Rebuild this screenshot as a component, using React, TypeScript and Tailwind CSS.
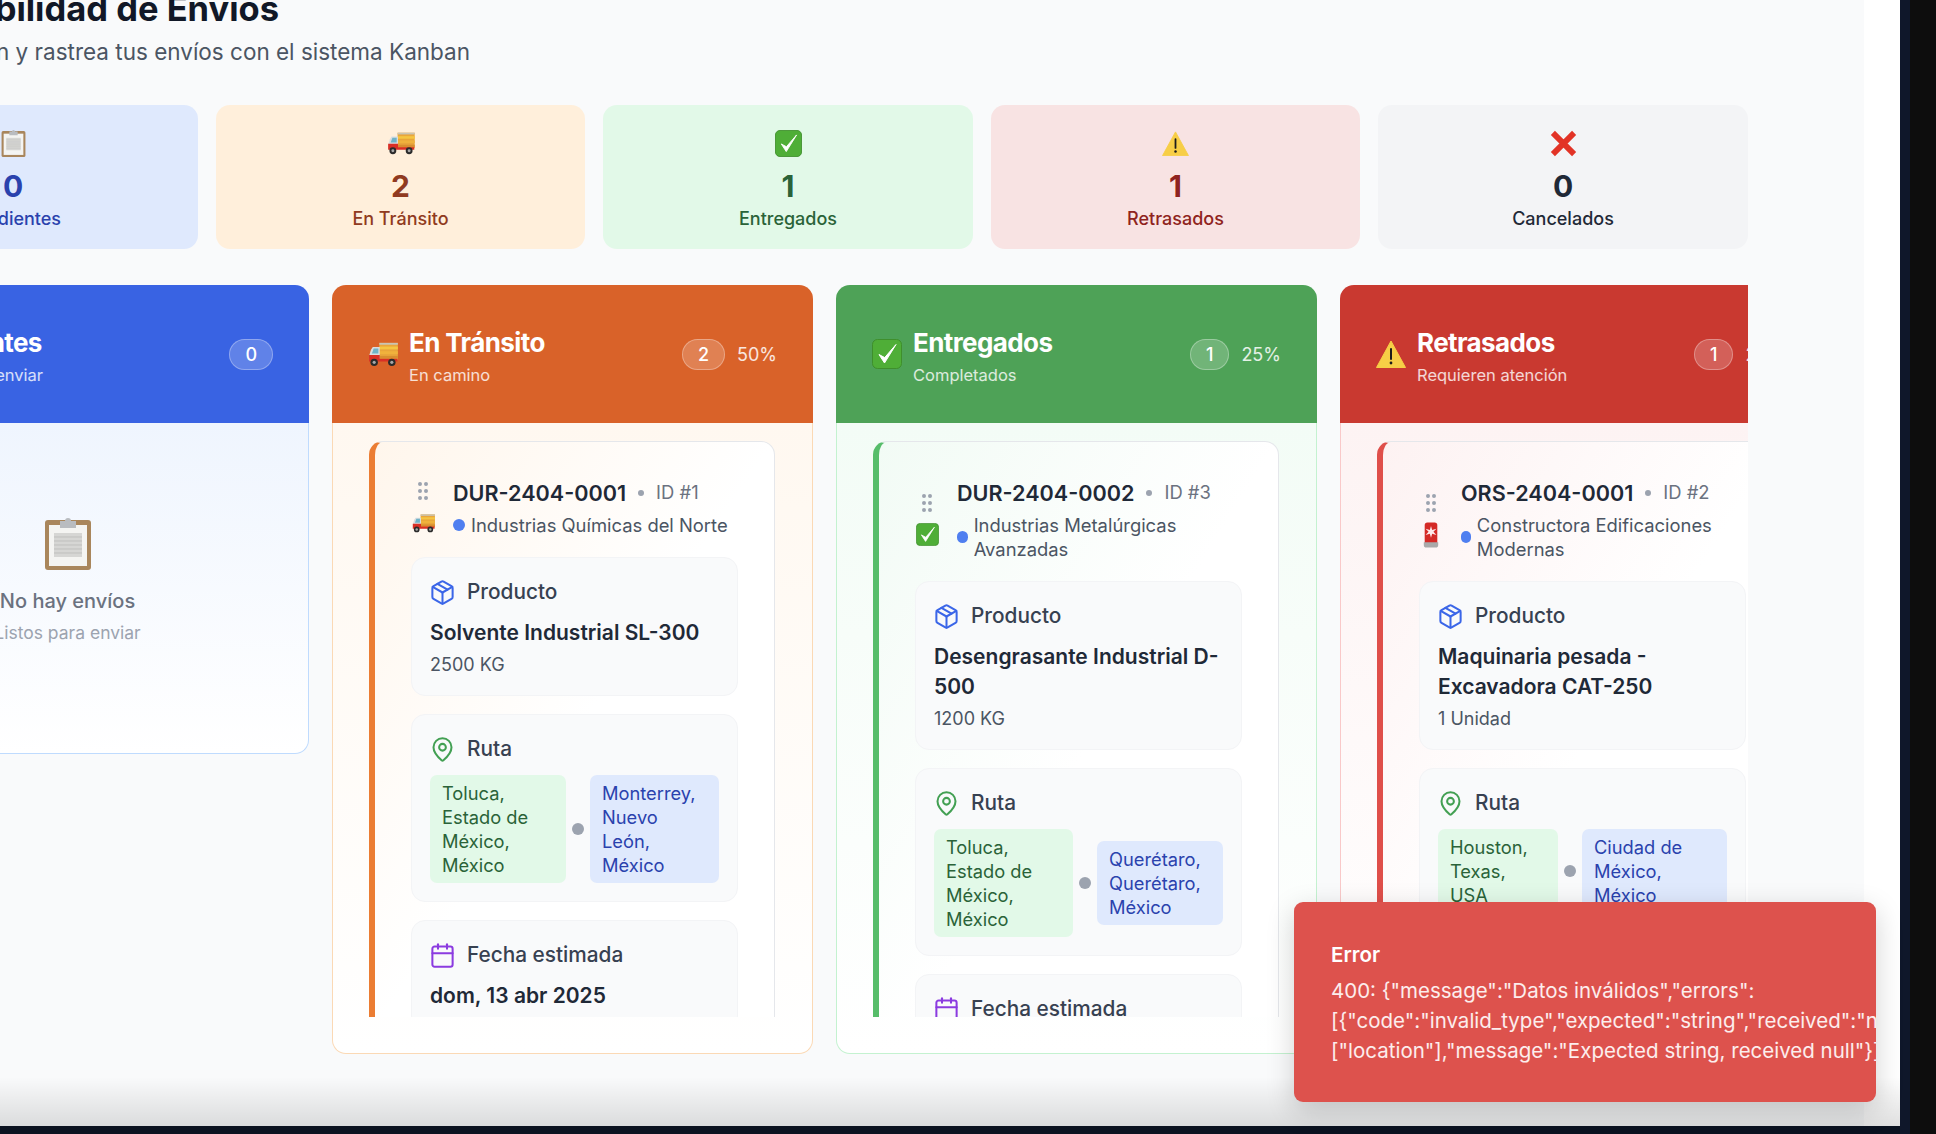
import { Calendar, GripVertical, MapPin, Package } from "lucide-react";
import type { ReactNode } from "react";

function Truck({ className }: { className: string }) {
  return (
    <svg viewBox="0 0 32 28" className={className}>
      <rect x="12" y="2" width="20" height="18" fill="#e9a63b" />
      <rect x="12" y="2" width="20" height="2" fill="#c9c4b4" />
      <rect x="12" y="6" width="20" height="3" fill="#f5c542" />
      <rect x="12" y="11" width="20" height="3" fill="#f0b23c" />
      <rect x="12" y="16" width="20" height="3" fill="#d98e2f" />
      <path d="M3 9.500 5 6.500h7.500v14H1.500v-6z" fill="#d9dde0" />
      <path d="M4 13.500 6 8h5v5.500z" fill="#6fb3c8" />
      <path d="M1 15h11.500v4H31.500v3H1z" fill="#d92f25" />
      <circle cx="6.500" cy="23" r="4" fill="#2b2b2b" />
      <circle cx="6.500" cy="23" r="1.700" fill="#a8a8a8" />
      <circle cx="25.500" cy="23" r="4" fill="#2b2b2b" />
      <circle cx="25.500" cy="23" r="1.700" fill="#a8a8a8" />
    </svg>
  );
}

function Check({ className }: { className: string }) {
  return (
    <svg viewBox="0 0 30 30" className={className}>
      <rect x="0.500" y="0.500" width="29" height="29" rx="5" fill="#4fae37" stroke="#3f8f2c" />
      <path d="M7 15.500 12.500 24 24 5.500 12.700 18.600z" fill="#fff" stroke="#fff" strokeWidth="1" strokeLinejoin="round" />
    </svg>
  );
}

function Warning({ className }: { className: string }) {
  return (
    <svg viewBox="0 0 30 28" className={className}>
      <path d="M15 1 29.500 27.500H.5z" fill="#f7ce46" stroke="#f7ce46" strokeLinejoin="round" />
      <rect x="14" y="8" width="2" height="12" rx="1" fill="#1c1c1c" />
      <circle cx="15" cy="23" r="1.400" fill="#1c1c1c" />
    </svg>
  );
}

function Cross({ className }: { className: string }) {
  return (
    <svg viewBox="0 0 28 28" className={className}>
      <path d="M3 3 25 25M25 3 3 25" stroke="#e23326" strokeWidth="6" fill="none" />
    </svg>
  );
}

function Siren({ className }: { className: string }) {
  return (
    <svg viewBox="0 0 20 28" className={className}>
      <path d="M3 3a3 3 0 0 1 3-3h8a3 3 0 0 1 3 3v20H3z" fill="#d42a26" />
      <path d="M10 4 11.300 8.500 16 7l-3.300 3.500L16 14l-4.700-1.500L10 17l-1.300-4.500L4 14l3.300-3.500L4 7l4.700 1.500z" fill="#fdeaea" />
      <path d="M2 22h16v3a3 3 0 0 1-3 3H5a3 3 0 0 1-3-3z" fill="#a9a9a9" />
    </svg>
  );
}

function Clipboard({ className }: { className: string }) {
  return (
    <svg viewBox="0 0 48 54" className={className}>
      <rect x="1" y="4" width="46" height="50" rx="3" fill="#a9865c" />
      <rect x="5" y="9" width="38" height="41" fill="#f4f4f2" />
      <rect x="10" y="17" width="28" height="24" fill="#d6d6d4" />
      <path d="M10 21h28M10 25h28M10 29h28M10 33h28M10 37h28" stroke="#bfbfbd" strokeWidth="1" />
      <path d="M16 5h5a3 3 0 0 1 6 0h5v7H16z" fill="#b9bcc0" />
    </svg>
  );
}

function Stat({ icon, value, label, bg, valueColor, labelColor, width }: { icon: ReactNode; value: string; label: string; bg: string; valueColor: string; labelColor: string; width: string }) {
  return (
    <div className={`flex h-[144px] shrink-0 flex-col items-center rounded-[14px] pt-[23px] ${bg} ${width}`}>
      <div className="flex h-[30px] items-center justify-center">{icon}</div>
      <div className={`mt-[10px] text-[30px] leading-[36px] font-bold ${valueColor}`}>{value}</div>
      <div className={`mt-[2px] text-[18px] leading-[26px] font-medium ${labelColor}`}>{label}</div>
    </div>
  );
}

function Section({ icon, label, children }: { icon: ReactNode; label: string; children: ReactNode }) {
  return (
    <div className="rounded-[14px] border border-[#f3f4f6] bg-[#f9fafb] pt-[18px] pr-[17px] pb-[18px] pl-[18px]">
      <div className="mb-[10px] flex h-[32px] items-center gap-[11px]">
        <div className="-ml-[1px] flex">{icon}</div>
        <span className="text-[20.800px] font-medium text-[#374151]">{label}</span>
      </div>
      {children}
    </div>
  );
}

function Chip({ lines, cls }: { lines: string[]; cls: string }) {
  return (
    <div className={`rounded-[7px] px-[12px] py-[6px] text-[18.300px] leading-[24px] ${cls}`}>
      {lines.map((l) => (
        <div key={l} className="whitespace-nowrap">{l}</div>
      ))}
    </div>
  );
}

type CardData = {
  code: string;
  id: string;
  client: string;
  emoji: ReactNode;
  bar: string;
  tint: string;
  product: string;
  qty: string;
  from: string[];
  to: string[];
  fromW: string;
  toW: string;
};

function ShipmentCard({ d }: { d: CardData }) {
  return (
    <div className={`w-[406px] shrink-0 self-start rounded-[14px] border border-l-[6px] border-[#e5e7eb] bg-gradient-to-br to-white to-50% px-[36px] pt-[37px] ${d.bar} ${d.tint}`}>
      <div className="flex gap-[18px]">
        <div className="flex w-[24px] shrink-0 flex-col items-center justify-center self-center">
          <GripVertical size={24} className="fill-[#9ca3af] text-[#9ca3af]" />
          <div className="flex h-[34px] items-center justify-center pt-[5px]">{d.emoji}</div>
        </div>
        <div className="min-w-0 flex-1">
          <div className="flex h-[28px] items-center">
            <span className="text-[21.600px] font-semibold whitespace-nowrap text-[#1f2937]">{d.code}</span>
            <span className="ml-[12px] h-[6px] w-[6px] rounded-full bg-[#9ca3af]" />
            <span className="ml-[12px] text-[18.400px] whitespace-nowrap text-[#6b7280]">{d.id}</span>
          </div>
          <div className="mt-[6px] flex items-center gap-[6px] text-[18.400px] leading-[24px] text-[#4b5563]">
            <span className="h-[12px] w-[12px] rounded-full bg-[#4f7ff0]" />
            <span>{d.client}</span>
          </div>
        </div>
      </div>
      <div className="mt-[20px] flex flex-col gap-[18px]">
        <Section icon={<Package size={27} strokeWidth={1.8} className="text-[#3b66e8]" />} label="Producto">
          <div className="mt-[1px] text-[21px] leading-[30px] font-semibold text-[#1f2937]">{d.product}</div>
          <div className="mt-[5px] text-[18px] leading-[24px] text-[#4b5563]">{d.qty}</div>
        </Section>
        <Section icon={<MapPin size={27} strokeWidth={1.8} className="text-[#43a053]" />} label="Ruta">
          <div className="flex items-center gap-[6px]">
            <div className={d.fromW}><Chip lines={d.from} cls="bg-[#e2f9e8] text-[#2a6338]" /></div>
            <span className="h-[12px] w-[12px] shrink-0 rounded-full bg-[#9ca3af]" />
            <div className={d.toW}><Chip lines={d.to} cls="bg-[#dfe9fd] text-[#2a42ad]" /></div>
          </div>
        </Section>
        <Section icon={<Calendar size={27} strokeWidth={1.8} className="text-[#8b3be0]" />} label="Fecha estimada">
          <div className="mt-[2px] text-[21px] leading-[30px] font-semibold text-[#1f2937]">dom, 13 abr 2025</div>
        </Section>
      </div>
    </div>
  );
}

function Column({ icon, title, sub, count, pct, head, body, border, auto, children }: { icon: ReactNode; title: string; sub: string; count: string; pct?: string; head: string; body: string; border: string; auto?: boolean; children: ReactNode }) {
  return (
    <div className={`flex w-[481px] shrink-0 flex-col ${auto ? "h-[469px]" : "h-[769px]"}`}>
      <div className={`flex h-[138px] items-center justify-between rounded-t-[14px] pr-[36px] pl-[36px] text-white ${head}`}>
        <div className="flex items-center gap-[11px]">
          <div className="flex w-[30px] justify-center">{icon}</div>
          <div className="mt-[4px]">
            <div className="text-[26px] leading-[36px] font-bold tracking-[-0.6px]">{title}</div>
            <div className="mt-[1px] text-[16.500px] leading-[26px] text-white/80">{sub}</div>
          </div>
        </div>
        <div className="flex items-center gap-[12px]">
          <span className="flex h-[31px] min-w-[36px] items-center justify-center rounded-full border border-white/30 bg-white/20 px-[15px] text-[18px] font-medium">{count}</span>
          {pct && <span className="text-[18px] text-white/85">{pct}</span>}
        </div>
      </div>
      <div className={`flex min-h-0 flex-1 flex-col rounded-b-[14px] border border-t-0 bg-gradient-to-b to-white pb-[36px] ${border} ${body}`}>
        <div className="flex min-h-0 flex-1 overflow-hidden pt-[18px] pl-[36px]">{children}</div>
      </div>
    </div>
  );
}

const cards: Record<string, CardData> = {
  a: {
    code: "DUR-2404-0001", id: "ID #1", client: "Industrias Químicas del Norte",
    emoji: <Truck className="h-[20px] w-[23px]" />, bar: "border-l-[#eb7d33]", tint: "from-[#fff6ec]",
    product: "Solvente Industrial SL-300", qty: "2500 KG",
    from: ["Toluca,", "Estado de", "México,", "México"], to: ["Monterrey,", "Nuevo", "León,", "México"], fromW: "w-[136px]", toW: "w-[129px]",
  },
  b: {
    code: "DUR-2404-0002", id: "ID #3", client: "Industrias Metalúrgicas Avanzadas",
    emoji: <Check className="h-[23px] w-[23px]" />, bar: "border-l-[#57bd6a]", tint: "from-[#f2fbf5]",
    product: "Desengrasante Industrial D-500", qty: "1200 KG",
    from: ["Toluca,", "Estado de", "México,", "México"], to: ["Querétaro,", "Querétaro,", "México"], fromW: "w-[139px]", toW: "w-[126px]",
  },
  c: {
    code: "ORS-2404-0001", id: "ID #2", client: "Constructora Edificaciones Modernas",
    emoji: <Siren className="h-[26px] w-[18px]" />, bar: "border-l-[#df4f4a]", tint: "from-[#fdf2f2]",
    product: "Maquinaria pesada - Excavadora CAT-250", qty: "1 Unidad",
    from: ["Houston,", "Texas,", "USA"], to: ["Ciudad de", "México,", "México"], fromW: "w-[120px]", toW: "w-[145px]",
  },
};

export default function App() {
  return (
    <div className="flex h-[1134px] w-[1936px] overflow-hidden bg-[#0d0d0d] font-['Inter',sans-serif]">
      <div className="flex w-[1900px] shrink-0 flex-col">
        <div className="relative flex min-h-0 flex-1">
          <main className="flex w-[1864px] shrink-0 flex-col overflow-hidden bg-[#f9fafb]">
            <div className="-ml-[172px] flex w-[1920px] flex-1 flex-col overflow-hidden">
              <h1 className="-mt-[12px] w-[451px] text-right text-[34.500px] leading-[42px] font-bold whitespace-nowrap text-[#111827]">Trazabilidad de Envíos</h1>
              <p className="mt-[6px] w-[642px] text-right text-[22.500px] leading-[32px] whitespace-nowrap text-[#4b5563]">Gestión y rastrea tus envíos con el sistema Kanban</p>
              <div className="mt-[37px] flex gap-[18px]">
                <Stat width="w-[370px]" bg="bg-[#dfe9fd]" valueColor="text-[#2a42ad]" labelColor="text-[#2a42ad]" value="0" label="Pendientes" icon={<Clipboard className="h-[28px] w-[25px]" />} />
                <Stat width="w-[369px]" bg="bg-[#ffefdb]" valueColor="text-[#903a20]" labelColor="text-[#903a20]" value="2" label="En Tránsito" icon={<Truck className="h-[24px] w-[28px]" />} />
                <Stat width="w-[370px]" bg="bg-[#e2f9e8]" valueColor="text-[#2a6338]" labelColor="text-[#2a6338]" value="1" label="Entregados" icon={<Check className="h-[27px] w-[27px]" />} />
                <Stat width="w-[369px]" bg="bg-[#f8e3e3]" valueColor="text-[#8f2320]" labelColor="text-[#8f2320]" value="1" label="Retrasados" icon={<Warning className="h-[25px] w-[27px]" />} />
                <Stat width="w-[370px]" bg="bg-[#f3f4f6]" valueColor="text-[#1f2937]" labelColor="text-[#1f2937]" value="0" label="Cancelados" icon={<Cross className="h-[27px] w-[27px]" />} />
              </div>
              <div className="mt-[36px] flex w-[1920px] gap-[23px] overflow-hidden">
                <Column auto head="bg-[#3963e3]" body="from-[#eff5fe]" border="border-[#bfdbfe]" icon={<Clipboard className="h-[30px] w-[27px]" />} title="Pendientes" sub="Listos para enviar" count="0">
                  <div className="flex w-full flex-col items-center pt-[75px] pr-[38px]">
                    <Clipboard className="h-[54px] w-[48px]" />
                    <div className="mt-[16px] text-[20px] leading-[30px] font-medium text-[#6b7280]">No hay envíos</div>
                    <div className="mt-[4px] text-[17.500px] leading-[26px] text-[#9ca3af]">Listos para enviar</div>
                  </div>
                </Column>
                <Column head="bg-[#d96229]" body="from-[#fff8f0]" border="border-[#fbd9b5]" icon={<Truck className="h-[26px] w-[30px]" />} title="En Tránsito" sub="En camino" count="2" pct="50%">
                  <ShipmentCard d={cards.a} />
                </Column>
                <Column head="bg-[#4ea257]" body="from-[#f3fcf6]" border="border-[#c4f2d0]" icon={<Check className="h-[30px] w-[30px]" />} title="Entregados" sub="Completados" count="1" pct="25%">
                  <ShipmentCard d={cards.b} />
                </Column>
                <Column head="bg-[#c93930]" body="from-[#fdf3f3]" border="border-[#f9c9c9]" icon={<Warning className="h-[28px] w-[30px]" />} title="Retrasados" sub="Requieren atención" count="1" pct="25%">
                  <ShipmentCard d={cards.c} />
                </Column>
              </div>
              <div className="flex-1" />
            </div>
          </main>
          <div className="flex-1 bg-white" />
          <div className="pointer-events-none absolute right-0 bottom-0 left-0 h-[49px] bg-gradient-to-b from-transparent to-[#0000001f]" />
          <div className="absolute top-[902px] left-[1294px] h-[200px] w-[582px] overflow-hidden rounded-[9px] bg-[#dd524d] px-[37px] pt-[38px] text-white shadow-[0_8px_28px_rgba(0,0,0,0.18)]">
            <div className="text-[20.500px] leading-[30px] font-semibold">Error</div>
            <div className="mt-[6px] w-[560px] text-[20.500px] leading-[30px] text-white/90">
              <div>400: {'{"message":"Datos inválidos","errors":'}</div>
              <div className="whitespace-nowrap">{'[{"code":"invalid_type","expected":"string","received":"null","path":'}</div>
              <div className="whitespace-nowrap">{'["location"],"message":"Expected string, received null"}]}'}</div>
            </div>
          </div>
        </div>
        <div className="h-[8px] shrink-0 bg-[#0b1220]" />
      </div>
      <div className="w-[10px] shrink-0 bg-[#0f172a]" />
    </div>
  );
}
